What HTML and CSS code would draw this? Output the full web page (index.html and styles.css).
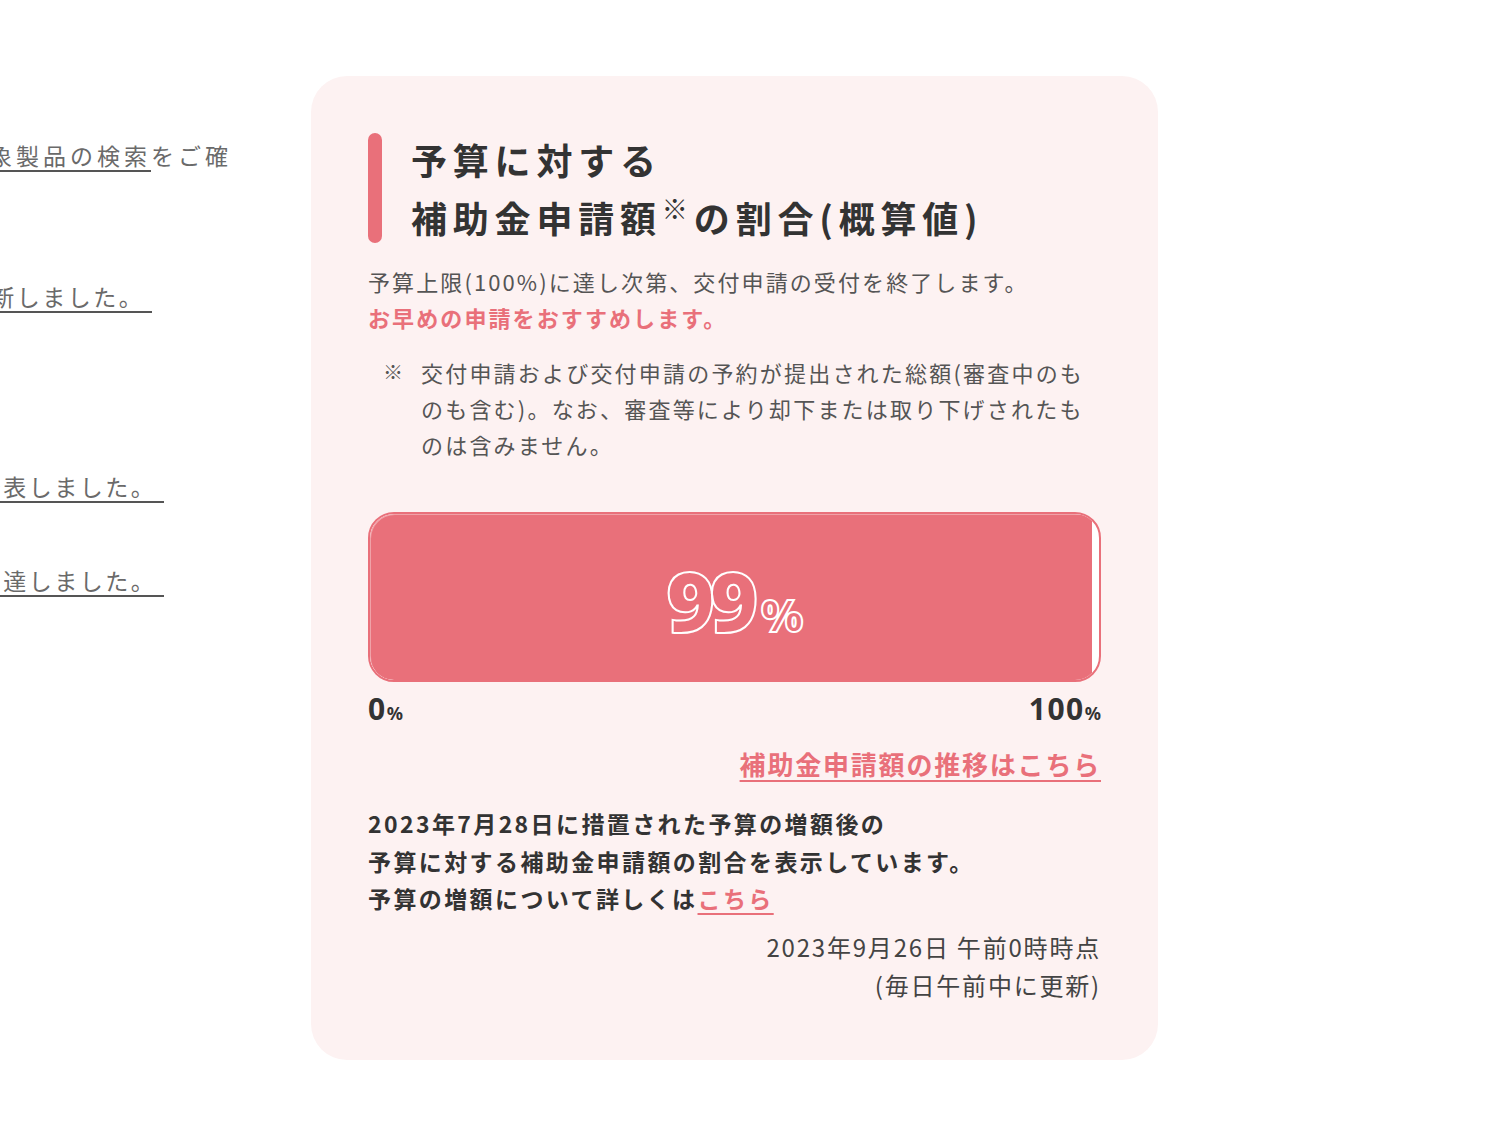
FILE: index.html
```html
<!DOCTYPE html>
<html lang="ja">
<head>
<meta charset="utf-8">
<title>予算に対する補助金申請額の割合</title>
<link rel="stylesheet" href="styles.css">
</head>
<body>
<div class="page">
  <div class="news">
    <div class="news-row row-1"><span class="news-text"><a class="news-link" href="#">補助対象製品の検索</a>をご確</span></div>
    <div class="news-row row-2"><span class="news-text"><a class="news-link" href="#">交付申請の手引きを更新しました。&nbsp;</a></span></div>
    <div class="news-row row-3"><span class="news-text"><a class="news-link" href="#">採択結果を公表しました。&nbsp;</a></span></div>
    <div class="news-row row-4"><span class="news-text"><a class="news-link" href="#">予算の上限に到達しました。&nbsp;</a></span></div>
  </div>

  <section class="card">
    <div class="heading">
      <span class="heading-bar"></span>
      <h2 class="heading-text">予算に対する<br>補助金申請額<sup class="mark">※</sup>の割合(概算値)</h2>
    </div>

    <p class="lead">予算上限(100%)に達し次第、交付申請の受付を終了します。</p>
    <p class="lead lead-accent">お早めの申請をおすすめします。</p>

    <div class="note">
      <span class="note-mark">※</span>
      <p class="note-text">交付申請および交付申請の予約が提出された総額(審査中のものも含む)。なお、審査等により却下または取り下げされたものは含みません。</p>
    </div>

    <div class="meter">
      <div class="meter-fill" style="width: 99%"></div>
      <div class="meter-value"><span class="meter-num">99</span><span class="meter-pct">%</span></div>
    </div>
    <div class="scale">
      <span class="scale-item">0<small>%</small></span>
      <span class="scale-item">100<small>%</small></span>
    </div>

    <div class="trend"><a class="trend-link" href="#">補助金申請額の推移はこちら</a></div>

    <p class="info">2023年7月28日に措置された予算の増額後の<br>予算に対する補助金申請額の割合を表示しています。<br>予算の増額について詳しくは<a class="info-link" href="#">こちら</a></p>

    <p class="stamp">2023年9月26日 午前0時時点<br>(毎日午前中に更新)</p>
  </section>
</div>
</body>
</html>
```

FILE: styles.css
```css
* { box-sizing: border-box; }

html, body {
  margin: 0;
  padding: 0;
  background: #ffffff;
}

body {
  font-family: "Noto Sans CJK JP", "Noto Sans", sans-serif;
  color: #333333;
}

.page {
  display: flex;
  align-items: flex-start;
  padding-top: 76px;
  width: 1500px;
  height: 1125px;
  overflow: hidden;
}

/* left (cut-off) news column */
.news {
  width: 311px;
  flex-shrink: 0;
  overflow: hidden;
}

.news-row {
  display: flex;
  justify-content: flex-end;
  height: 36px;
  line-height: 36px;
  font-size: 23px;
  letter-spacing: 2.5px;
  color: #6a6a6a;
  white-space: nowrap;
  overflow: visible;
}

.news-text { flex-shrink: 0; }

.news-link {
  color: #6a6a6a;
  text-decoration: underline;
  text-decoration-color: #555555;
  text-decoration-thickness: 2px;
  text-underline-offset: 5px;
}

.row-1 { margin-top: 61px; padding-right: 79px; letter-spacing: 4px; }
.row-2 { margin-top: 105px; padding-right: 159px; }
.row-3 { margin-top: 154px; padding-right: 147px; }
.row-4 { margin-top: 58px; padding-right: 147px; }

/* card */
.card {
  width: 847px;
  flex-shrink: 0;
  background: #fdf2f2;
  border-radius: 36px;
  padding: 54px 57px 56px 57px;
}

.heading {
  display: flex;
  gap: 29px;
}

.heading-bar {
  width: 14px;
  flex-shrink: 0;
  margin: 3px 0 3px 0;
  border-radius: 7px;
  background: #e9707a;
}

.heading-text {
  margin: 0;
  font-size: 36px;
  line-height: 58px;
  font-weight: 700;
  letter-spacing: 5.8px;
  color: #333333;
}

.mark {
  font-size: 26px;
  font-weight: 400;
  vertical-align: 14px;
  line-height: 0;
  letter-spacing: 6px;
}

.lead {
  margin: 17px 0 0 0;
  font-size: 22px;
  line-height: 36px;
  letter-spacing: 2.1px;
  color: #555555;
}

.lead-accent {
  margin-top: 0;
  font-weight: 700;
  color: #e9707a;
}

.note {
  display: flex;
  margin-top: 19px;
  padding-left: 15px;
  font-size: 22px;
  line-height: 36px;
  letter-spacing: 2.2px;
  color: #555555;
}

.note-mark {
  width: 38px;
  flex-shrink: 0;
  font-size: 20px;
}

.note-text {
  margin: 0;
}

/* meter */
.meter {
  position: relative;
  margin-top: 50px;
  height: 170px;
  border: 2px solid #e9707a;
  border-radius: 26px;
  background: #ffffff;
  overflow: hidden;
  display: flex;
  align-items: center;
  justify-content: center;
}

.meter-fill {
  position: absolute;
  left: 0;
  top: 0;
  bottom: 0;
  background: #e9707a;
  border-radius: 24px 0 0 24px;
  box-shadow: inset 1px 1px 0 rgba(255,255,255,0.35);
}

.meter-value {
  position: relative;
  display: flex;
  align-items: baseline;
  margin-top: 6px;
  font-family: "Noto Sans", "DejaVu Sans", sans-serif;
  font-weight: 900;
  color: transparent;
  -webkit-text-stroke: 2px #ffffff;
}

.meter-num {
  font-size: 84px;
  line-height: 1;
  letter-spacing: -6px;
}

.meter-pct {
  font-size: 44px;
  line-height: 1;
  margin-left: 9px;
}

.scale {
  display: flex;
  justify-content: space-between;
  margin-top: 11px;
  font-family: "Noto Sans", sans-serif;
  font-size: 30px;
  line-height: 32px;
  font-weight: 700;
  color: #333333;
  letter-spacing: 1.5px;
}

.scale-item small {
  font-size: 18px;
  font-weight: 700;
  letter-spacing: 0;
}

.trend {
  display: flex;
  justify-content: flex-end;
  margin-top: 15px;
  font-size: 26px;
  line-height: 40px;
  font-weight: 700;
  letter-spacing: 1.8px;
}

.trend-link {
  color: #e9707a;
  text-decoration: underline;
  text-decoration-thickness: 2px;
  text-underline-offset: 5px;
}

.info {
  margin: 21px 0 0 0;
  font-size: 23px;
  line-height: 37.5px;
  font-weight: 700;
  letter-spacing: 2.4px;
  color: #333333;
}

.info-link {
  color: #e9707a;
  text-decoration: underline;
  text-decoration-thickness: 2px;
  text-underline-offset: 5px;
}

.stamp {
  margin: 10px 0 0 0;
  text-align: right;
  font-size: 24px;
  line-height: 38px;
  letter-spacing: 1.8px;
  color: #444444;
}
```
